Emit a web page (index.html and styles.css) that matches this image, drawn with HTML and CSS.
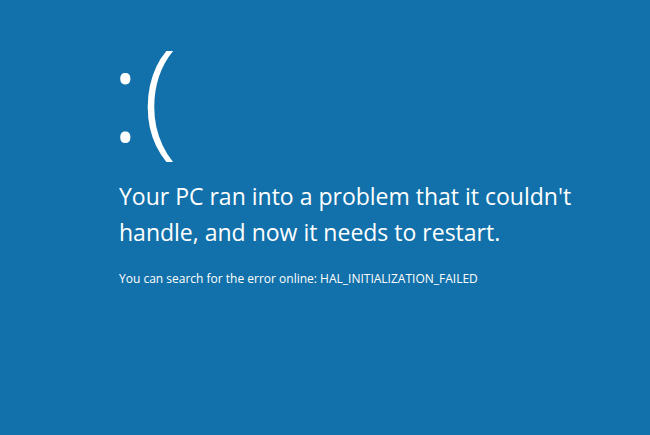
FILE: index.html
```html
<!DOCTYPE html>
<html>
<head>
<meta charset="utf-8">
<link rel="stylesheet" href="styles.css">
</head>
<body>
<main class="screen">
  <div class="face">:(</div>
  <p class="headline">Your PC ran into a problem that it couldn't handle, and now it needs to restart.</p>
  <p class="detail">You can search for the error online: HAL_INITIALIZATION_FAILED</p>
</main>
</body>
</html>
```
FILE: styles.css
```css
html, body {
  margin: 0;
  padding: 0;
  width: 650px;
  height: 435px;
  overflow: hidden;
  background: #1271aa;
}
.screen {
  padding: 18px 0 0 119px;
  color: #ffffff;
  font-family: "Open Sans", "Noto Sans", sans-serif;
}
.face {
  font-size: 128px;
  line-height: 150px;
  font-weight: 300;
  letter-spacing: 2px;
  margin: 0 0 0 -9px;
}
.headline {
  margin: 10px 0 0 0;
  font-size: 23px;
  line-height: 36px;
  width: 480px;
}
.detail {
  margin: 21px 0 0 0;
  font-size: 12px;
  line-height: 16px;
}
```
